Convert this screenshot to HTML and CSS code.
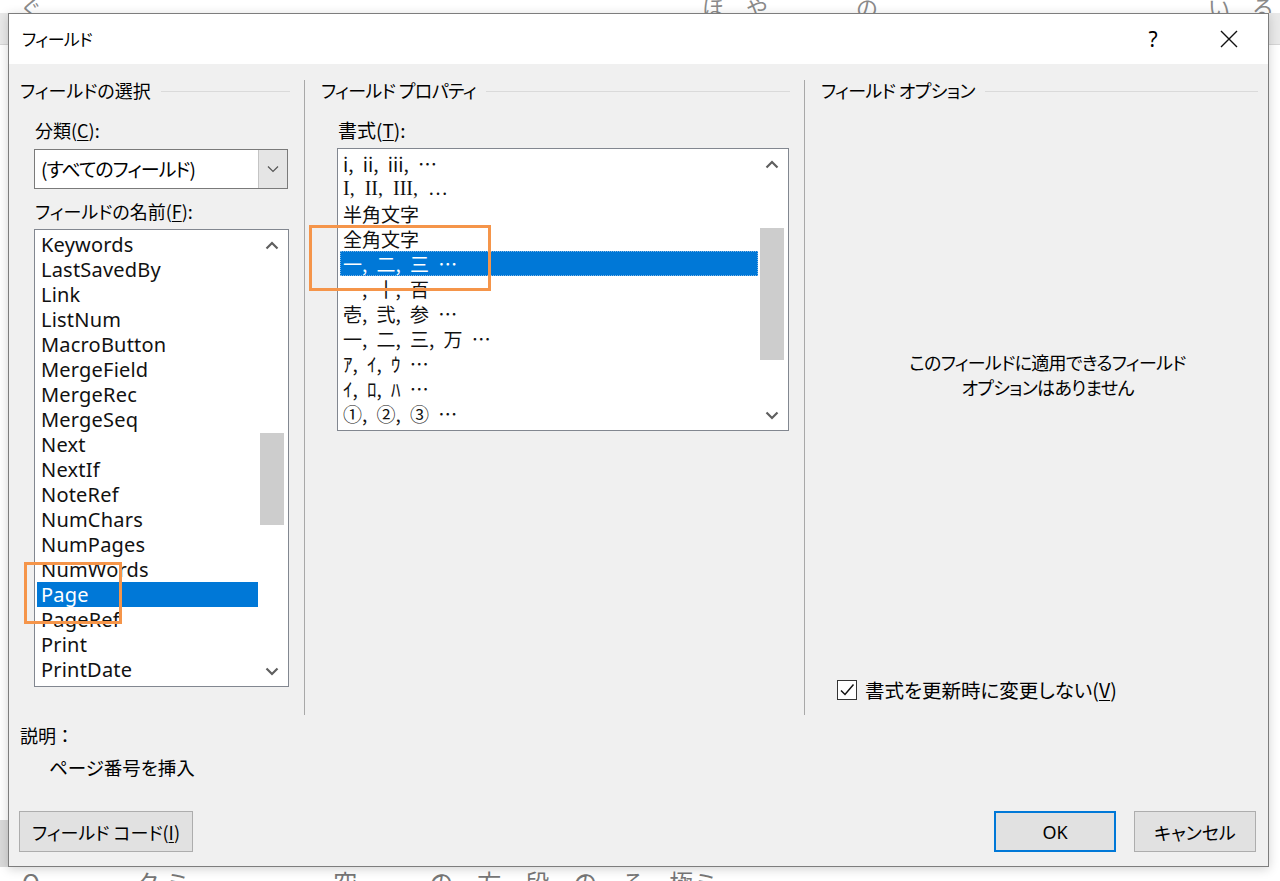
FILE: index.html
```html
<!DOCTYPE html>
<html lang="ja">
<head>
<meta charset="utf-8">
<title>フィールド</title>
<link rel="stylesheet" href="styles.css">
</head>
<body>
<div class="desktop">
  <div class="doc-top"><span class="doc-text">ぐ　　　　　　　　　　　　　　　　　　　　　　　　　　　　　　ほ　や　　　　の　　　　　　　　　　　　　　　い　る</span></div>
  <div class="dialog">
    <div class="titlebar">
      <span class="title">フィールド</span>
      <span class="tb-btn help">?</span>
      <span class="tb-btn close">
        <svg width="18" height="18" viewBox="0 0 18 18"><path d="M1 1L17 17M17 1L1 17" stroke="#111" stroke-width="1.4" fill="none"/></svg>
      </span>
    </div>
    <div class="dbody">
      <div class="cols">
        <section class="col col1">
          <div class="group-head"><span>フィールドの選択</span></div>
          <div class="col-body">
            <div class="field-label first">分類(<u>C</u>):</div>
            <div class="combo">
              <span class="combo-text">(すべてのフィールド)</span>
              <span class="combo-btn">
                <svg width="12" height="8" viewBox="0 0 12 8"><path d="M1 1.5L6 6.5L11 1.5" stroke="#555" stroke-width="1.2" fill="none"/></svg>
              </span>
            </div>
            <div class="field-label second">フィールドの名前(<u>F</u>):</div>
            <div class="listbox names">
              <ul class="items">
                <li>Keywords</li>
                <li>LastSavedBy</li>
                <li>Link</li>
                <li>ListNum</li>
                <li>MacroButton</li>
                <li>MergeField</li>
                <li>MergeRec</li>
                <li>MergeSeq</li>
                <li>Next</li>
                <li>NextIf</li>
                <li>NoteRef</li>
                <li>NumChars</li>
                <li>NumPages</li>
                <li>NumWords</li>
                <li class="sel">Page</li>
                <li>PageRef</li>
                <li>Print</li>
                <li>PrintDate</li>
              </ul>
              <div class="sb">
                <span class="sb-arrow">
                  <svg width="14" height="9" viewBox="0 0 14 9"><path d="M1.5 7.5L7 2L12.5 7.5" stroke="#5f5f5f" stroke-width="2.2" fill="none"/></svg>
                </span>
                <span class="sb-track"><span class="sb-thumb" style="margin-top:173px;height:92px"></span></span>
                <span class="sb-arrow">
                  <svg width="14" height="9" viewBox="0 0 14 9"><path d="M1.5 1.5L7 7L12.5 1.5" stroke="#5f5f5f" stroke-width="2.2" fill="none"/></svg>
                </span>
              </div>
              <span class="mark mark-names"></span>
            </div>
          </div>
        </section>
        <div class="vsep"></div>
        <section class="col col2">
          <div class="group-head"><span>フィールド プロパティ</span></div>
          <div class="col-body">
            <div class="field-label first">書式(<u>T</u>):</div>
            <div class="listbox formats">
              <ul class="items">
                <li>i, ii, iii, …</li>
                <li class="serif">I, II, III, …</li>
                <li>半角文字</li>
                <li>全角文字</li>
                <li class="sel focus">一, 二, 三 …</li>
                <li>一, 十, 百 …</li>
                <li>壱, 弐, 参 …</li>
                <li>一, 二, 三, 万 …</li>
                <li>ｱ, ｲ, ｳ …</li>
                <li>ｲ, ﾛ, ﾊ …</li>
                <li>①, ②, ③ …</li>
              </ul>
              <div class="sb">
                <span class="sb-arrow">
                  <svg width="14" height="9" viewBox="0 0 14 9"><path d="M1.5 7.5L7 2L12.5 7.5" stroke="#5f5f5f" stroke-width="2.2" fill="none"/></svg>
                </span>
                <span class="sb-track"><span class="sb-thumb" style="margin-top:49px;height:132px"></span></span>
                <span class="sb-arrow">
                  <svg width="14" height="9" viewBox="0 0 14 9"><path d="M1.5 1.5L7 7L12.5 1.5" stroke="#5f5f5f" stroke-width="2.2" fill="none"/></svg>
                </span>
              </div>
              <span class="mark mark-formats"></span>
            </div>
          </div>
        </section>
        <div class="vsep"></div>
        <section class="col col3">
          <div class="group-head"><span>フィールド オプション</span></div>
          <div class="options-msg">このフィールドに適用できるフィールド<br>オプションはありません</div>
          <label class="check-row">
            <span class="checkbox">
              <svg width="18" height="18" viewBox="0 0 18 18"><path d="M3 9.5L7 13.5L15.5 3.5" stroke="#111" stroke-width="1.5" fill="none"/></svg>
            </span>
            <span>書式を更新時に変更しない(<u>V</u>)</span>
          </label>
        </section>
      </div>
      <div class="desc-label">説明：</div>
      <div class="desc-text">ページ番号を挿入</div>
      <div class="buttons">
        <button class="btn btn-code">フィールド コード(<u>I</u>)</button>
        <span class="spacer"></span>
        <button class="btn btn-ok">OK</button>
        <button class="btn btn-cancel">キャンセル</button>
      </div>
    </div>
  </div>
  <div class="doc-bottom"><span class="doc-text big">O　　　　ク ミ　　　　　　空　　　の　方　段　の　る　極ミ</span></div>
</div>
</body>
</html>
```

FILE: styles.css
```css
* { box-sizing: border-box; }

html, body {
  margin: 0;
  padding: 0;
}

body {
  font-family: "Noto Sans CJK JP", "Noto Sans", sans-serif;
  color: #000;
  background: #fff;
}

.desktop {
  width: 1280px;
  height: 881px;
  overflow: hidden;
  display: flex;
  flex-direction: column;
  background-color: #fff;
  background-image:
    linear-gradient(to bottom, transparent 13px, #e9e9e9 13px, #e9e9e9 44px, #d6d6d6 44px, #d6d6d6 45px, transparent 45px),
    linear-gradient(to bottom, transparent 820px, #dadada 820px, #dadada 867px, transparent 867px);
  background-size: 100% 100%, 8px 100%;
  background-repeat: no-repeat;
}

.doc-top {
  height: 13px;
  flex: none;
  overflow: hidden;
  padding-left: 20px;
}

.doc-text {
  display: block;
  color: #8a8a8a;
  font-size: 22px;
  line-height: 13px;
  white-space: pre;
}

.doc-bottom {
  height: 14px;
  flex: none;
  overflow: hidden;
  padding-left: 22px;
}

.doc-text.big {
  color: #777;
  font-size: 24px;
  line-height: 14px;
  padding-top: 8px;
}

.dialog {
  margin-left: 8px;
  width: 1261px;
  height: 854px;
  flex: none;
  border: 1px solid #7d7d7d;
  background: #f0f0f0;
  display: flex;
  flex-direction: column;
  box-shadow: 0 2px 10px rgba(0, 0, 0, 0.18);
  position: relative;
  z-index: 1;
  font-feature-settings: "palt";
}

.titlebar {
  height: 50px;
  flex: none;
  background: #fff;
  display: flex;
  align-items: center;
  padding-left: 13px;
}

.title {
  flex: 1;
  font-size: 17px;
  letter-spacing: -0.6px;
  line-height: 24px;
}

.tb-btn {
  width: 46px;
  height: 50px;
  display: flex;
  align-items: center;
  justify-content: center;
}

.help {
  font-family: "Noto Sans", sans-serif;
  font-size: 21px;
  margin-right: 30px;
}

.close {
  margin-right: 16px;
}

.dbody {
  flex: 1;
  display: flex;
  flex-direction: column;
  padding-top: 16px;
}

.cols {
  display: flex;
  height: 635px;
  flex: none;
}

.col {
  display: flex;
  flex-direction: column;
}

.col1 { width: 295px; }
.col2 { width: 499px; }
.col3 { flex: 1; }

.vsep {
  width: 1px;
  background: #a8a8a8;
  flex: none;
}

.group-head {
  display: flex;
  align-items: center;
  gap: 10px;
  height: 20px;
  font-size: 18px;
  line-height: 20px;
  white-space: nowrap;
}

.col2 .group-head span,
.col3 .group-head span {
  letter-spacing: -0.6px;
}

.group-head::after {
  content: "";
  flex: 1;
  height: 1px;
  background: #dadada;
  margin-top: 2px;
}

.col1 .group-head { padding: 0 14px 0 11px; }
.col2 .group-head { padding: 0 14px 0 16px; }
.col3 .group-head { padding: 0 10px 0 16px; }

.col1 .col-body { padding-left: 25px; }
.col2 .col-body { padding-left: 32px; }

.field-label {
  font-size: 18px;
  line-height: 24px;
  padding-left: 1px;
}

.col2 .field-label {
  font-size: 19px;
}

.field-label.first { margin-top: 18px; }
.field-label.second { margin-top: 10px; }

u {
  text-decoration: underline;
  text-underline-offset: 2px;
  text-decoration-thickness: 1px;
}

.combo {
  width: 254px;
  height: 40px;
  margin-top: 7px;
  border: 1px solid #7a7a7a;
  background: #fff;
  display: flex;
}

.combo-text {
  flex: 1;
  padding-left: 6px;
  font-size: 19px;
  letter-spacing: -1px;
  line-height: 38px;
}

.combo-btn {
  width: 29px;
  background: #e5e5e5;
  border-left: 1px solid #c4c4c4;
  display: flex;
  align-items: center;
  justify-content: center;
}

.listbox {
  border: 1px solid #828790;
  background: #fff;
  display: flex;
  position: relative;
}

.names {
  width: 255px;
  height: 458px;
  margin-top: 6px;
}

.formats {
  width: 452px;
  height: 283px;
  margin-top: 6px;
}

.items {
  flex: 1;
  list-style: none;
  margin: 0;
  padding: 2px 1px 0 2px;
}

.items li {
  height: 25px;
  line-height: 25px;
  font-size: 20px;
  letter-spacing: 0.2px;
  font-family: "Noto Sans", "Noto Sans CJK JP", sans-serif;
  white-space: nowrap;
  padding-left: 4px;
  color: #111;
}

.formats .items li {
  font-family: "Noto Sans CJK JP", sans-serif;
  padding-left: 3px;
  font-size: 19px;
  letter-spacing: 0;
  word-spacing: 5px;
}

.formats .items li.serif {
  font-family: "Liberation Serif", "Noto Sans CJK JP", serif;
  font-size: 20px;
}

.items li.sel {
  background: #0078d7;
  color: #fff;
}

.items li.focus {
  outline: 1px dotted #7fb6e6;
  outline-offset: -1px;
}

.sb {
  width: 29px;
  flex: none;
  display: flex;
  flex-direction: column;
  padding: 0 4px 0 1px;
  background: #fff;
}

.sb-arrow {
  height: 30px;
  width: 100%;
  display: flex;
  align-items: center;
  justify-content: center;
  flex: none;
}

.sb-track {
  flex: 1;
  width: 100%;
  display: flex;
  flex-direction: column;
}

.sb-thumb {
  display: block;
  width: 24px;
  background: #cdcdcd;
}

.mark {
  position: absolute;
  border: 3px solid #f5954a;
  pointer-events: none;
}

.mark-names {
  left: -11px;
  top: 332px;
  width: 98px;
  height: 62px;
}

.mark-formats {
  left: -29px;
  top: 76px;
  width: 182px;
  height: 66px;
}

.options-msg {
  margin-top: 250px;
  padding-left: 22px;
  text-align: center;
  font-size: 18px;
  letter-spacing: -0.7px;
  line-height: 25px;
}

.check-row {
  margin-top: 278px;
  padding-left: 32px;
  display: flex;
  align-items: center;
  gap: 8px;
  font-size: 19.5px;
  line-height: 24px;
}

.checkbox {
  width: 20px;
  height: 20px;
  border: 1px solid #333;
  background: #fff;
  display: flex;
  align-items: center;
  justify-content: center;
}

.desc-label {
  margin-top: 8px;
  padding-left: 11px;
  font-size: 18px;
  line-height: 24px;
  font-feature-settings: normal;
}

.desc-text {
  margin-top: 8px;
  padding-left: 40px;
  font-size: 18.5px;
  line-height: 24px;
}

.buttons {
  margin-top: 32px;
  display: flex;
  padding: 0 12px 0 10px;
  gap: 18px;
}

.spacer { flex: 1; }

.btn {
  height: 41px;
  background: #e1e1e1;
  border: 1px solid #adadad;
  font-family: "Noto Sans CJK JP", "Noto Sans", sans-serif;
  font-feature-settings: "palt";
  font-size: 18px;
  color: #000;
  padding: 0;
}

.btn-code { width: 174px; }

.btn-ok {
  width: 122px;
  border: 2px solid #0078d7;
  font-family: "Noto Sans", sans-serif;
}

.btn-cancel { width: 122px; }
```
